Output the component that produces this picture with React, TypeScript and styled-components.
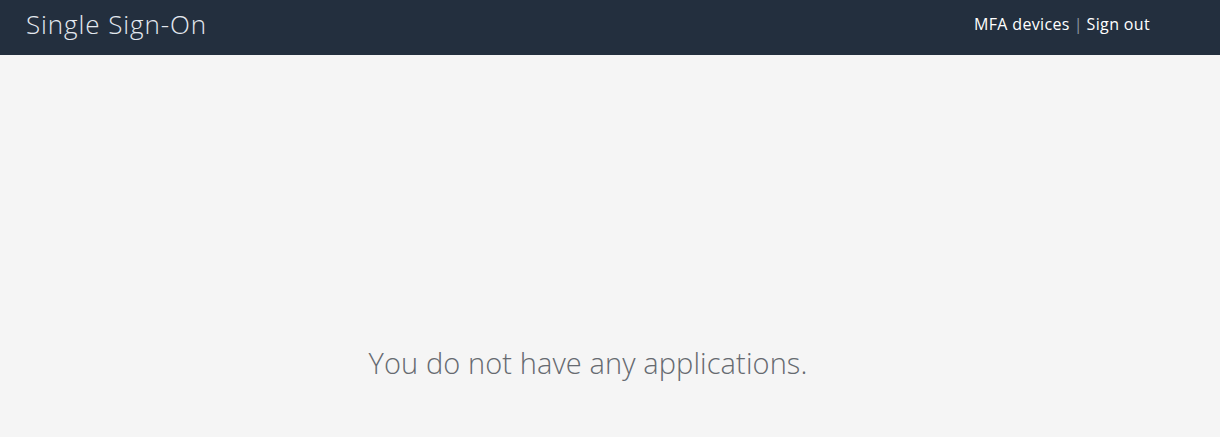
import React from "react";
import styled, { createGlobalStyle } from "styled-components";

const Global = createGlobalStyle`
  html, body { margin: 0; padding: 0; background: #f5f5f5; }
  body { font-family: "Open Sans", "Noto Sans", sans-serif; }
`;

const Page = styled.div`
  min-height: 437px;
  display: flex;
  flex-direction: column;
  background: #f5f5f5;
`;

const Header = styled.header`
  height: 55px;
  background: #232f3e;
  display: flex;
  align-items: center;
  justify-content: space-between;
  padding: 0 70px 0 26px;
`;

const Title = styled.h1`
  margin: 0;
  font-size: 26px;
  font-weight: 300;
  color: #e3e9f0;
  letter-spacing: 0.9px;
  padding-bottom: 8px;
`;

const Nav = styled.nav`
  display: flex;
  align-items: center;
  gap: 4px;
  font-size: 16px;
  color: #ffffff;
  padding-bottom: 8px;
`;

const NavLink = styled.a`
  color: #ffffff;
  text-decoration: none;
  font-weight: 500;
  letter-spacing: 0.35px;
`;

const Sep = styled.span`
  color: #8d96a0;
`;

const Main = styled.main`
  flex: 1;
  display: flex;
  justify-content: center;
  padding: 288px 44px 0 0;
`;

const Empty = styled.p`
  margin: 0;
  font-size: 29px;
  font-weight: 300;
  color: #666a70;
  letter-spacing: 0.1px;
`;

export default function App() {
  return (
    <>
      <Global />
      <Page>
        <Header>
          <Title>Single Sign-On</Title>
          <Nav>
            <NavLink href="#">MFA devices</NavLink>
            <Sep>|</Sep>
            <NavLink href="#">Sign out</NavLink>
          </Nav>
        </Header>
        <Main>
          <Empty>You do not have any applications.</Empty>
        </Main>
      </Page>
    </>
  );
}
